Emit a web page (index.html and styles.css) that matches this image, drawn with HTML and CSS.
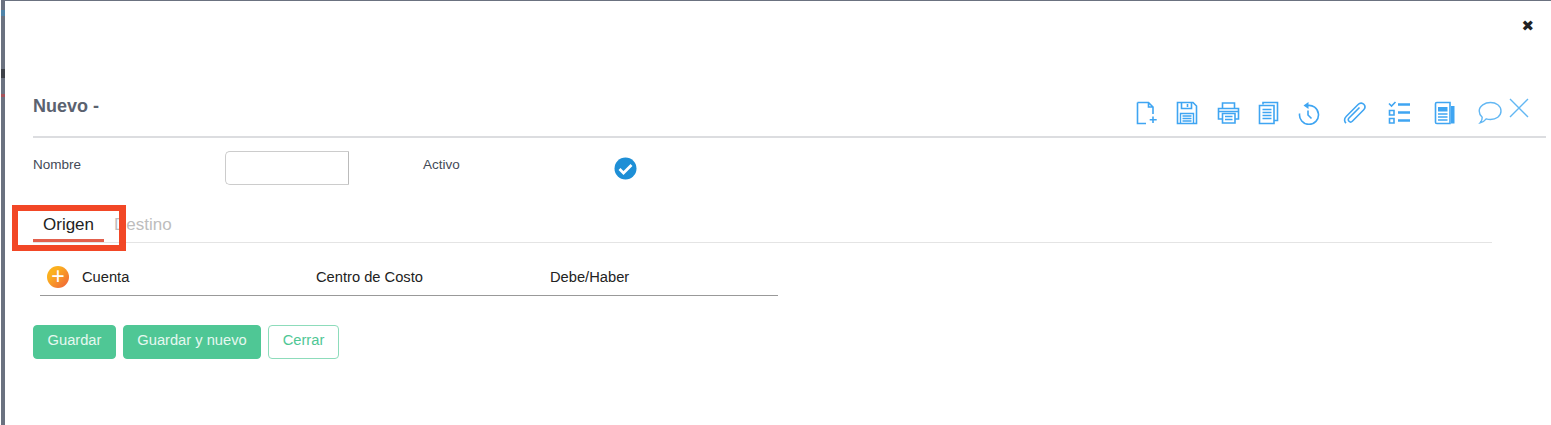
FILE: index.html
```html
<!DOCTYPE html>
<html lang="es">
<head>
    <meta charset="UTF-8">
    <title>Nuevo</title>
    <link rel="stylesheet" href="styles.css">
</head>
<body>
    <!-- bits of the page behind the dialog -->
    <div class="behind behind-blue"></div>
    <div class="behind behind-dark"></div>
    <div class="behind behind-red"></div>

    <div class="modal">
        <div class="close-row"><button class="close-btn">&#10006;</button></div>

        <div class="title-bar">
            <h1>Nuevo -</h1>
            <div class="tools">
                <!-- new file -->
                <svg class="tool" width="22" height="24" viewBox="0 0 22 24"><path d="M1.500 1.500h11l4.500 4.500v7M12.500 1.500v4.500h4.500M10 22.500H1.500v-21"/><path d="M17 15.500v6.500M13.700 18.800h7"/></svg>
                <!-- save -->
                <svg class="tool" width="22" height="24" viewBox="0 0 22 24"><path d="M1.500 1.500h15.500l3.500 3.500v17.500h-19z"/><path d="M5.500 1.500v6h10v-6M11.500 3v3"/><path class="thin" d="M4.500 22.500v-10h13v10M6.500 15h9M6.500 17.500h9M6.500 20h9"/></svg>
                <!-- printer -->
                <svg class="tool" width="23" height="24" viewBox="0 0 23 24"><path d="M5.500 7.500v-5.500h12v5.500M5 18H1.500V7.500h20V18H18"/><path d="M5.500 12.500h12.500v9.500H5.500z"/><path class="thin" d="M8 15.500h7.500M8 18.500h7.500M2 10.500h19"/></svg>
                <!-- copies -->
                <svg class="tool" width="21" height="24" viewBox="0 0 21 24"><path d="M5 3.500V1.500h14.500v18H16"/><path d="M1.500 4.500h14.500v18H1.500z"/><path class="thin" d="M4.500 8.500h9M4.500 11.500h9M4.500 14.500h9M4.500 17.500h9"/></svg>
                <!-- history -->
                <svg class="tool" width="22" height="24" viewBox="0 0 22 24"><path d="M9 4.600A9.500 9.500 0 1 1 1.600 12.500"/><path class="solid" d="M10.500 1v7L5.500 4.500z"/><path d="M10 9.500v4.500l3.500 3.500"/></svg>
                <!-- paperclip -->
                <svg class="tool wide" width="23" height="24" viewBox="0 0 23 24"><path d="M16.500 6.500 6 17c-1.300 1.300-.6 2.700 0 3.300s2 1.300 3.300 0L20.500 9c2.200-2.200 1.400-4.500.3-5.700-1.200-1.200-3.600-1.900-5.700.2L3.400 15.200c-2.800 2.800-1.900 5.700-.4 7"/></svg>
                <!-- checklist -->
                <svg class="tool wide" width="23" height="24" viewBox="0 0 23 24"><path d="M1 2.500 3.500 5 7.500 1M1.500 9.500h4.500v4.500H1.500zM1.500 17.500h4.500v4.500H1.500z"/><path class="bold" d="M10 3.500h12M10 11.500h12M10 19.500h12"/></svg>
                <!-- news -->
                <svg class="tool wide" width="22" height="24" viewBox="0 0 22 24"><path d="M1.500 2.800q0-1.300 1.300-1.300h13.200v21H2.800q-1.300 0-1.300-1.300z"/><path class="solid" d="M4 6h9.500v4.500H4zM17 5h3.500v17.500H17z"/><path class="thin" d="M4 13h9.500M4 16h9.500M4 19h9.500"/></svg>
                <!-- comment -->
                <svg class="tool thin-tool wide" width="24" height="24" viewBox="0 0 24 24"><path d="M12.500 1.500c5.500 0 10.500 3.300 10.500 8.500s-5 8.500-10.500 8.500c-1.500 0-3-.2-4.300-.6-1.400 1.900-3.500 3.400-6 3.900 1.400-1.500 2.100-3.400 2-5.500C2.300 14.500 1.200 12.400 1.200 10c0-5.200 5.800-8.500 11.300-8.500z"/></svg>
                <!-- cancel -->
                <svg class="tool thin-tool cancel" width="20" height="20" viewBox="0 0 20 20"><path d="M1 1l18 18M19 1 1 19"/></svg>
            </div>
        </div>

        <div class="form-row">
            <label class="label-name">Nombre</label>
            <input class="text-input" type="text">
            <label class="label-active">Activo</label>
            <svg class="check" width="23" height="23" viewBox="0 0 23 23"><circle cx="11.500" cy="11.500" r="11" fill="#1e8fd6"/><path d="M5.500 12l4 4 8-8" fill="none" stroke="#fff" stroke-width="2.800"/></svg>
        </div>

        <div class="tabs">
            <div class="tab active">Origen</div>
            <div class="tab">Destino</div>
            <div class="mark"></div>
        </div>

        <div class="grid-head">
            <span class="add">+</span>
            <span class="col col-account">Cuenta</span>
            <span class="col col-center">Centro de Costo</span>
            <span class="col">Debe/Haber</span>
        </div>

        <div class="buttons">
            <button class="btn btn-save">Guardar</button>
            <button class="btn btn-savenew">Guardar y nuevo</button>
            <button class="btn btn-close">Cerrar</button>
        </div>
    </div>
</body>
</html>
```

FILE: styles.css
```css
html, body { margin: 0; height: 425px; overflow: hidden; }
body { font-family: "Liberation Sans", Arial, sans-serif; background-color: #6b7280; border-left: 1px solid white; }

.behind { position: absolute; left: 1px; width: 4px; }
.behind-blue { top: 10px; height: 6px; background: #4f83a8; }
.behind-dark { top: 69px; height: 9px; background: #3d4148; }
.behind-red { top: 94px; height: 3px; background: #a5525a; }

.modal { box-sizing: border-box; height: 424px; margin: 1px 0 0 4px; padding: 0 5px 0 28px; background: white; }

.close-row { display: flex; justify-content: flex-end; height: 76px; }
.close-btn {
    margin: 14px 12px 0 0; padding: 0; height: 21px; border: none; background: none;
    font-size: 15px; font-weight: bold; color: #222; font-family: "DejaVu Sans", sans-serif;
}

.title-bar { display: flex; justify-content: space-between; height: 59px; border-bottom: 2px solid #dcdde0; }
h1 { margin: 19px 0 0; font-size: 18px; line-height: 20px; color: #5b6270; }

.tools { display: flex; align-items: flex-start; gap: 18.600px; margin: 24px 17px 0 0; }
.tool { fill: none; stroke: #3fa5f2; stroke-width: 1.600; flex: none; }
.tool .thin { stroke-width: 1.400; }
.tool .bold { stroke-width: 2.400; }
.tool .solid { fill: #3fa5f2; stroke: none; }
.tool.wide { margin-left: 4px; }
.thin-tool { stroke: #62b7f3; stroke-width: 1.400; }
.tool.cancel { margin: -3px 0 0 -12px; }

.form-row { display: flex; align-items: flex-start; height: 67px; font-size: 13.500px; color: #444a57; }
.form-row label { margin-top: 19px; line-height: 15px; }
.label-name { width: 192px; }
.label-active { width: 191px; }
.text-input {
    box-sizing: border-box; width: 124px; height: 34px; margin: 13px 74px 0 0; padding: 0 8px;
    background: white; border: 1px solid #ccc; border-right-color: #bbb; border-radius: 5px 0 0 5px;
}
.check { margin-top: 19px; }

.tabs { position: relative; display: flex; height: 37px; border-bottom: 1px solid #e4e4e4; margin-right: 54px; font-size: 17px; line-height: 20px; }
.tab { padding: 10px 0 0; color: #bdbdbd; }
.tab.active { width: 71px; margin-right: 10px; padding-left: 10px; box-sizing: border-box; color: #222; border-bottom: 3px solid #e2604d; height: 37px; }
.mark { position: absolute; left: -21px; top: 0; width: 101px; height: 34px; border: 6px solid #f24726; border-right-width: 7px; }

.grid-head {
    display: flex; align-items: center; box-sizing: border-box; width: 738px; height: 53px;
    margin-left: 7px; padding: 16px 0 0 7px; border-bottom: 1px solid #999; font-size: 14.700px; color: #222;
}
.add {
    flex: none; width: 22px; height: 22px; margin-right: 13px; border-radius: 50%;
    background: linear-gradient(135deg, #fbb01f 30%, #ef5d3b);
    color: white; font-size: 23px; line-height: 21px; text-align: center;
}
.col { flex: none; }
.col-account { width: 234px; }
.col-center { width: 234px; }

.buttons { display: flex; gap: 7px; margin-top: 29px; }
.btn {
    box-sizing: border-box; height: 34px; padding: 0 0 5px; font-size: 14.700px; font-family: inherit;
    border: 1px solid #4fc795; border-radius: 4px; background-color: #4fc795; color: #e6f8f0;
}
.btn-save { width: 83px; }
.btn-savenew { width: 138px; }
.btn-close { width: 71px; background: white; color: #4fc795; border-color: #8ddcbb; }
```
